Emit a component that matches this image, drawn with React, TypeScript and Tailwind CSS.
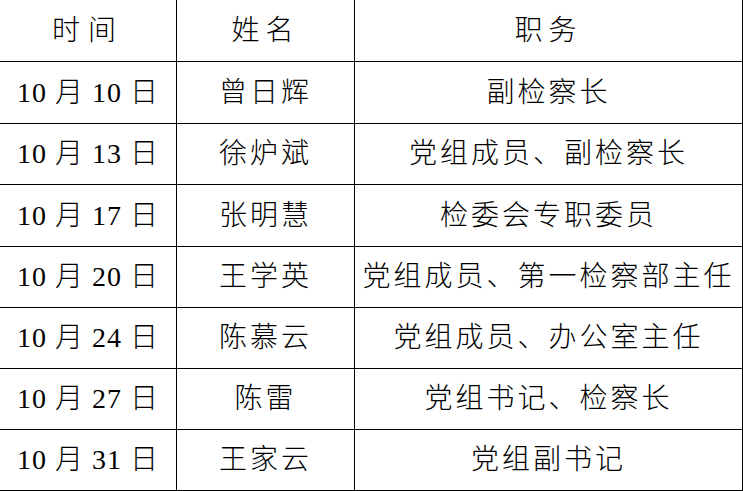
const rows = [
  { date: "10 月 10 日", name: "曾日辉", title: "副检察长", h: "h-[62px]" },
  { date: "10 月 13 日", name: "徐炉斌", title: "党组成员、副检察长", h: "h-[61px]" },
  { date: "10 月 17 日", name: "张明慧", title: "检委会专职委员", h: "h-[62px]" },
  { date: "10 月 20 日", name: "王学英", title: "党组成员、第一检察部主任", h: "h-[61px]" },
  { date: "10 月 24 日", name: "陈慕云", title: "党组成员、办公室主任", h: "h-[61px]" },
  { date: "10 月 27 日", name: "陈雷", title: "党组书记、检察长", h: "h-[61px]" },
  { date: "10 月 31 日", name: "王家云", title: "党组副书记", h: "h-[61px]" },
]

function Cell({ children, className = "" }: { children: React.ReactNode; className?: string }) {
  return (
    <div className={`flex items-center justify-center border-r border-b border-black ${className}`}>
      {children}
    </div>
  )
}

export default function App() {
  return (
    <div className="h-[491px] w-[743px] overflow-hidden bg-white font-['Liberation_Serif','Noto_Sans_CJK_SC',serif] text-[28px] leading-none font-light text-black">
      <div className="grid h-[62px] grid-cols-[177px_178px_388px]">
        <Cell className="tracking-[8px]">时间</Cell>
        <Cell className="tracking-[6px]">姓名</Cell>
        <Cell className="tracking-[6px]">职务</Cell>
      </div>
      {rows.map((r) => (
        <div key={r.date} className={`grid grid-cols-[177px_178px_388px] ${r.h}`}>
          <Cell className="tracking-[1px] whitespace-pre">{r.date}</Cell>
          <Cell className="tracking-[3px]">{r.name}</Cell>
          <Cell className="tracking-[3px]">{r.title}</Cell>
        </div>
      ))}
    </div>
  )
}
